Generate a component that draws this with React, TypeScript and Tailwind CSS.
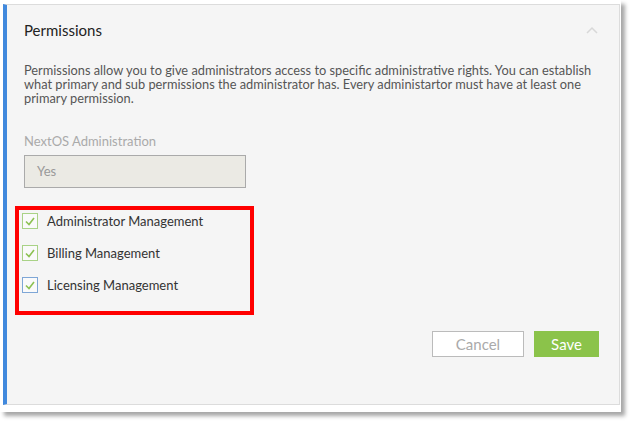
import React from 'react';

const font = { fontFamily: 'Lato, "Open Sans", Arial, sans-serif' };

const Check = ({ label, focused }: { label: string; focused?: boolean }) => (
  <label className="flex items-center gap-[9px]">
    <span
      className={`flex h-4 w-4 items-center justify-center border bg-[#fafafa] ${
        focused ? 'border-[#7ea6d6]' : 'border-[#a9d286]'
      }`}
    >
      <svg width="14" height="14" viewBox="0 0 14 14">
        <polyline points="3,7.5 6,10.5 11,4" fill="none" stroke="#8cc152" strokeWidth="1.6" />
      </svg>
    </span>
    <span className="text-[13px] leading-4 text-[#333]">{label}</span>
  </label>
);

const App = () => {
  return (
    <div className="h-[422px] w-[630px] bg-white" style={font}>
      <div className="h-[412px] w-[621px] bg-white pl-[3px] pt-[4px] shadow-[4px_4px_4px_rgba(0,0,0,0.35)]">
        <div className="flex h-[401px] w-[617px] flex-col border border-l-4 border-[#dcdcdc] border-l-[#4189dd] bg-[#f5f5f5] pl-[17px]">
          <div className="flex items-center justify-between pr-[21px] pt-[15px]">
            <h2 className="text-[15px] leading-5 text-[#222]">Permissions</h2>
            <svg width="12" height="8" viewBox="0 0 12 8">
              <polyline points="1,7 6,2 11,7" fill="none" stroke="#d8d8d8" strokeWidth="1.5" />
            </svg>
          </div>
          <p className="mt-[23px] pr-[14px] text-[12.8px] leading-[14px] text-[#555]">
            Permissions allow you to give administrators access to specific administrative rights. You can establish
            what primary and sub permissions the administrator has. Every administartor must have at least one
            primary permission.
          </p>
          <div className="mt-[28px] text-[13px] leading-4 text-[#aaa]">NextOS Administration</div>
          <div className="mt-[6px] flex h-[33px] w-[222px] items-center border border-[#aaa] bg-[#ebeae4] pl-3 text-[13px] text-[#999]">
            Yes
          </div>
          <div className="-ml-[9px] mt-[18px] flex h-[109px] w-[239px] flex-col gap-4 border-4 border-[#ff0000] pl-[3px] pt-[3px]">
            <Check label="Administrator Management" />
            <Check label="Billing Management" />
            <Check label="Licensing Management" focused />
          </div>
          <div className="mt-[16px] flex justify-end gap-[10px] pr-[20px]">
            <button className="h-[26px] w-[92px] border border-[#bbb] bg-white text-[15px] text-[#aaa]">Cancel</button>
            <button className="h-[26px] w-[65px] bg-[#8bc34a] text-[15px] text-white">Save</button>
          </div>
        </div>
      </div>
    </div>
  );
};

export default App;
